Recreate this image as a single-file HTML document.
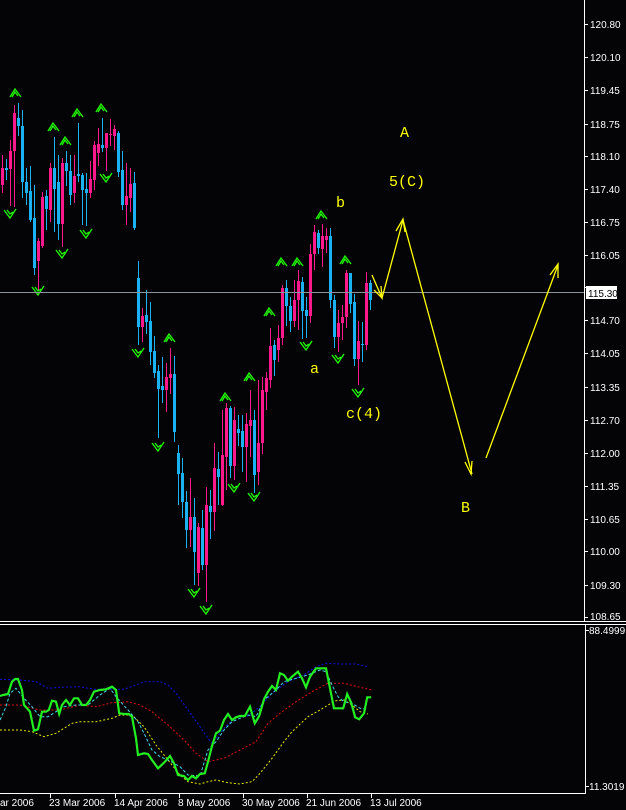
<!DOCTYPE html>
<html><head><meta charset="utf-8"><style>
html,body{margin:0;padding:0;background:#040306;}
svg{display:block;font-family:"Liberation Sans",sans-serif;}
</style></head><body>
<svg id="s" width="626" height="810" viewBox="0 0 626 810" xmlns="http://www.w3.org/2000/svg" shape-rendering="crispEdges">
<rect width="626" height="810" fill="#040306"/>
<g id="candles"></g>
<g id="frac" fill="none" stroke="#22ff00" stroke-width="1.3" shape-rendering="auto"></g>
<line x1="0" y1="292.5" x2="584" y2="292.5" stroke="#8c929c"/>
<!-- yellow wave lines -->
<g stroke="#ffff00" stroke-width="1.3" fill="none" shape-rendering="auto">
<polyline points="372,275 382,298 403,220 472,474"/>
<polyline points="374,290 382,298 381,286"/>
<polyline points="396,231 403,219 405,232"/>
<polyline points="465,462 471,474 472,461"/>
<line x1="486" y1="458" x2="558" y2="265"/>
<polyline points="550,275 558,264 558,278"/>
</g>
<g fill="#ffff00" font-family="'Liberation Mono',monospace" font-size="15">
<text x="400" y="137">A</text>
<text x="389" y="186">5(C)</text>
<text x="336" y="207">b</text>
<text x="310" y="373">a</text>
<text x="346" y="418">c(4)</text>
<text x="461" y="512">B</text>
</g>
<!-- axes -->
<line x1="584.5" y1="0" x2="584.5" y2="621" stroke="#fff"/>
<line x1="0" y1="621.5" x2="626" y2="621.5" stroke="#fff"/>
<line x1="0" y1="624.5" x2="626" y2="624.5" stroke="#fff"/>
<line x1="585.5" y1="625" x2="585.5" y2="793" stroke="#fff"/>
<line x1="0" y1="793.5" x2="586" y2="793.5" stroke="#fff"/>
<g id="ticks" stroke="#fff"></g>
<g fill="#fff" font-size="10">
<text x="590" y="28">120.80</text>
<text x="590" y="61">120.10</text>
<text x="590" y="94">119.45</text>
<text x="590" y="128">118.75</text>
<text x="590" y="160">118.10</text>
<text x="590" y="193">117.40</text>
<text x="590" y="226">116.75</text>
<text x="590" y="259">116.05</text>
<text x="590" y="324">114.70</text>
<text x="590" y="357">114.05</text>
<text x="590" y="391">113.35</text>
<text x="590" y="424">112.70</text>
<text x="590" y="457">112.00</text>
<text x="590" y="490">111.35</text>
<text x="590" y="523">110.65</text>
<text x="590" y="555">110.00</text>
<text x="590" y="589">109.30</text>
<text x="590" y="620">108.65</text>
<text x="589" y="634">88.4999</text>
<text x="589" y="790">11.3019</text>
</g>
<rect x="586" y="286" width="31" height="13" fill="#fff"/>
<text x="588" y="297" font-size="10" fill="#000">115.30</text>
<g fill="#fff" font-size="10">
<text x="0" y="806">ar 2006</text>
<text x="49" y="806">23 Mar 2006</text>
<text x="114" y="806">14 Apr 2006</text>
<text x="178" y="806">8 May 2006</text>
<text x="242" y="806">30 May 2006</text>
<text x="306" y="806">21 Jun 2006</text>
<text x="370" y="806">13 Jul 2006</text>
</g>
<g id="ind" fill="none" shape-rendering="auto"></g>
</svg>
<script>
var NS="http://www.w3.org/2000/svg";
function el(p,n,a){var e=document.createElementNS(NS,n);for(var k in a)e.setAttribute(k,a[k]);p.appendChild(e);return e;}
var B="#1ab2f2",P="#ff1a8c";
// [x, top, bottom, color, hi, lo]
var d=[[2,168,185,P,155,193],[6,168,170,B,159,180],[10,151,169,P,140,206],[14,113,151,P,105,207],[18,118,126,B,103,136],[22,126,182,B,110,198],[26,182,193,B,168,205],[30,191,220,B,166,222],[34,218,268,B,185,275],[38,241,261,P,238,290],[42,197,246,P,192,248],[46,196,209,B,190,230],[50,168,210,P,163,222],[54,168,189,B,137,232],[58,182,224,B,155,240],[62,163,224,P,158,247],[66,163,171,B,151,186],[70,171,195,B,155,205],[74,176,193,P,155,203],[78,174,176,B,123,182],[82,175,190,B,173,225],[86,189,193,B,173,226],[90,179,193,P,161,198],[94,145,180,P,141,190],[98,144,153,P,128,166],[102,145,148,B,118,152],[106,133,148,P,134,171],[110,134,135,P,119,146],[114,129,136,P,125,150],[118,133,172,B,131,177],[122,170,205,B,151,210],[126,196,205,P,163,225],[130,184,198,P,168,212],[134,183,228,B,172,230],
[138,278,327,B,261,345],[142,316,327,P,308,342],[146,315,322,B,290,334],[150,321,352,B,302,365],[154,351,373,B,336,378],[158,371,389,B,365,438],[162,386,390,B,357,403],[166,377,390,P,363,412],[170,374,378,P,348,394],[174,374,432,B,356,442],[178,453,474,B,445,505],[182,473,502,B,458,518],[186,502,530,B,491,548],[190,517,530,P,478,547],[194,517,552,B,498,585],[198,527,573,P,523,586],[202,528,565,B,510,570],[206,505,565,P,487,602],[210,506,512,B,490,539],[214,468,512,P,443,531],[218,469,477,B,452,505],[222,455,505,P,410,506],[226,408,457,P,403,490],[230,408,466,B,406,478],[234,420,466,P,407,480],[238,429,433,B,415,446],[242,431,447,B,415,472],[246,424,447,P,413,482],[250,420,426,P,390,457],[254,420,475,B,410,493],[258,443,472,P,380,485],[262,390,443,P,377,454],[266,378,392,P,372,410],[270,346,380,P,328,388],[274,345,360,B,340,376],[278,338,350,P,325,362],
[282,288,338,P,285,345],[286,288,306,B,280,326],[290,306,321,B,297,332],[294,300,321,P,280,327],[298,281,300,P,270,330],[302,282,311,B,277,339],[306,310,316,B,297,338],[310,254,316,P,244,323],[314,232,254,P,225,270],[318,233,248,B,230,254],[322,236,249,P,224,267],[326,236,240,P,228,253],[330,236,300,B,228,308],[334,300,337,B,295,348],[338,323,337,P,310,352],[342,317,323,P,305,340],[346,273,317,P,270,328],[350,273,304,B,273,313],[354,302,359,B,294,366],[358,341,359,P,321,385],[362,344,345,B,322,362],[366,283,345,P,272,350],[370,283,300,B,280,310]];
var g=document.getElementById("candles");
d.forEach(function(c){el(g,"rect",{x:c[0],y:c[4],width:1,height:c[5]-c[4],fill:c[3]});el(g,"rect",{x:c[0]-1,y:c[1],width:3,height:Math.max(1,c[2]-c[1]),fill:c[3]});});
var f=document.getElementById("frac");
var up=[[16,93],[54,127],[66,141],[78,113],[102,108],[170,338],[226,397],[250,377],[270,312],[282,262],[298,262],[322,215],[346,260]];
var dn=[[10,214],[38,291],[62,254],[86,234],[106,178],[138,353],[158,447],[194,593],[206,610],[234,488],[254,497],[306,346],[338,359],[358,393]];
up.forEach(function(p){var x=p[0],y=p[1];el(f,"polyline",{points:(x-6)+","+(y+4)+" "+(x-1)+","+(y-4)+" "+(x+5)+","+(y+4)});el(f,"polyline",{points:(x-4)+","+(y+4)+" "+(x-1)+","+(y-1)+" "+(x+2)+","+(y+3)});});
dn.forEach(function(p){var x=p[0],y=p[1];el(f,"polyline",{points:(x-6)+","+(y-4)+" "+(x)+","+(y+4)+" "+(x+6)+","+(y-5)});el(f,"polyline",{points:(x-3)+","+(y-4)+" "+(x)+","+(y)+" "+(x+3)+","+(y-2)});});
var t=document.getElementById("ticks");
[24,57,90,124,156,189,222,255,287,320,353,387,420,453,486,519,551,585,617].forEach(function(y){el(t,"line",{x1:585,y1:y+.5,x2:588,y2:y+.5});});
[630,786].forEach(function(y){el(t,"line",{x1:586,y1:y+.5,x2:589,y2:y+.5});});
[50,115,179,243,307,371].forEach(function(x){el(t,"line",{x1:x+.5,y1:794,x2:x+.5,y2:798});});
function cv(a){var s=[];for(var i=0;i<a.length;i+=2)s.push((a[i]/2.5).toFixed(1)+","+(610+a[i+1]/3).toFixed(1));return s.join(" ");}
var ind=document.getElementById("ind");
var blue=[0,208,50,210,90,215,120,235,150,232,200,230,235,238,270,238,310,238,340,225,360,215,400,215,420,225,440,250,470,300,500,350,520,385,530,400,560,355,590,320,620,318,650,290,680,250,720,215,760,195,790,170,815,160,850,162,890,162,920,170];
var red=[0,285,50,285,100,300,150,300,200,285,240,290,280,278,320,275,350,285,380,305,420,345,460,390,490,430,520,455,560,445,600,420,640,395,670,340,700,310,740,275,780,245,820,220,860,220,900,232,930,240];
var yel=[0,360,50,360,80,365,110,380,140,370,160,355,180,340,200,335,240,335,280,325,300,315,330,315,360,350,390,405,420,450,450,495,470,515,500,522,520,515,540,510,570,518,600,522,630,515,650,490,680,445,710,395,730,365,770,320,800,300,820,285,840,272,860,270,880,285,900,305,920,312];
var cy=[0,330,15,290,25,250,40,235,60,265,80,290,100,320,120,320,140,305,160,290,190,285,220,285,250,255,275,235,290,260,320,300,345,335,360,370,380,420,400,440,420,450,450,470,470,495,500,498,520,420,540,395,560,360,580,335,600,325,620,315,640,320,660,270,690,240,710,215,740,205,770,195,800,180,815,185,830,225,845,260,860,275,880,280,900,295,920,298];
var gr=[0,258,8,255,20,252,30,215,38,207,45,207,55,240,60,285,75,305,85,362,95,358,105,305,115,305,122,300,130,272,140,275,148,312,155,285,165,270,175,285,185,265,195,265,205,285,215,285,225,270,235,245,250,240,265,238,280,230,290,240,298,310,310,312,322,312,330,320,340,385,345,435,360,430,370,432,380,450,395,475,410,458,425,438,435,460,445,495,460,498,470,510,480,498,490,505,500,492,512,490,520,455,530,408,540,370,550,362,560,330,570,312,580,330,590,322,600,318,612,318,625,290,637,340,648,318,660,268,670,245,680,228,690,240,700,190,710,195,720,212,730,200,745,185,755,205,765,232,775,200,790,175,815,175,825,235,835,295,858,295,868,252,878,278,888,322,898,328,910,310,918,262,928,262];
el(ind,"polyline",{points:cv(blue),stroke:"#1010e0","stroke-width":1,"stroke-dasharray":"2,2"});
el(ind,"polyline",{points:cv(red),stroke:"#e01010","stroke-width":1,"stroke-dasharray":"2,2"});
el(ind,"polyline",{points:cv(yel),stroke:"#e8e800","stroke-width":1,"stroke-dasharray":"2,2"});
el(ind,"polyline",{points:cv(cy),stroke:"#40d8e8","stroke-width":1,"stroke-dasharray":"3,2"});
el(ind,"polyline",{points:cv(gr),stroke:"#22ee22","stroke-width":2.2});
</script>
</body></html>
